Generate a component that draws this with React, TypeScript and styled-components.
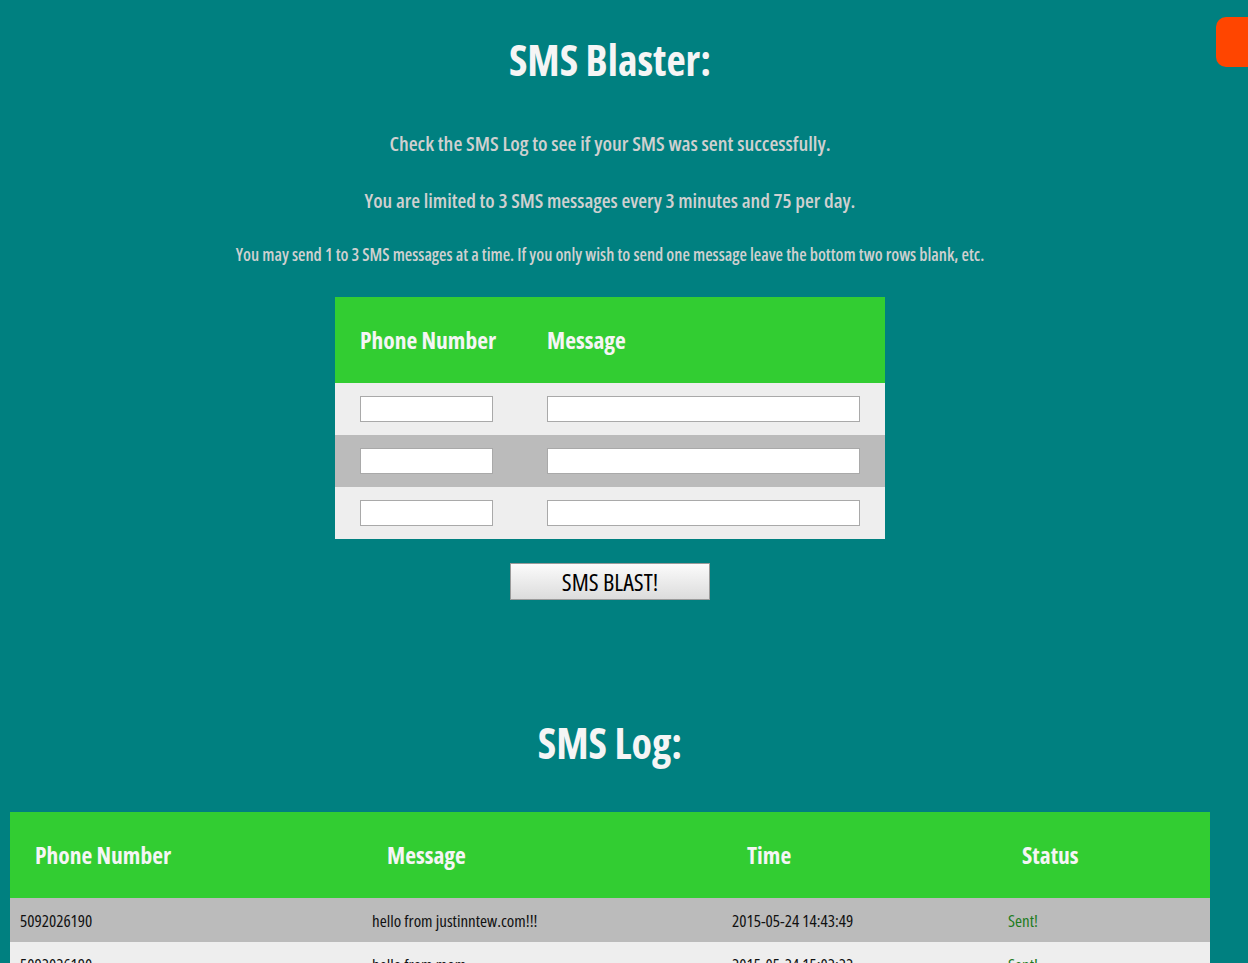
import React from "react";
import styled, { createGlobalStyle } from "styled-components";

const GlobalStyle = createGlobalStyle`
  html, body {
    margin: 0;
    padding: 0;
    background: #008080;
    overflow: hidden;
  }
  body {
    font-family: "Open Sans", "Roboto", sans-serif;
    font-stretch: 75%;
  }
`;

const Page = styled.div`
  width: 1200px;
  margin-left: 10px;
  padding-top: 30px;
  display: flex;
  flex-direction: column;
  align-items: center;
`;

const Title = styled.h1<{ $top?: number }>`
  margin: ${(p) => p.$top ?? 0}px 0 0;
  height: 60px;
  line-height: 60px;
  font-size: 42px;
  font-weight: 700;
  color: #f5f5f5;
`;

const Note = styled.p<{ $top: number; $size: number }>`
  margin: ${(p) => p.$top}px 0 0;
  height: 30px;
  line-height: 30px;
  font-size: ${(p) => p.$size}px;
  font-weight: 600;
  color: #d0d0d0;
  white-space: nowrap;
`;

const FormTable = styled.div`
  margin-top: 27px;
  width: 550px;
  display: grid;
  grid-template-columns: 187px 1fr;
`;

const HeadCell = styled.div<{ $pad: number }>`
  background: #32cd32;
  height: 86px;
  display: flex;
  align-items: center;
  padding-left: ${(p) => p.$pad}px;
  font-size: 23.5px;
  font-weight: 700;
  color: #f5f5f5;
`;

const FormCell = styled.div<{ $alt: boolean; $right?: boolean }>`
  background: ${(p) => (p.$alt ? "#bbbbbb" : "#eeeeee")};
  height: 52px;
  display: flex;
  align-items: center;
  padding-left: 25px;
  padding-right: ${(p) => (p.$right ? 25 : 0)}px;
`;

const Field = styled.input<{ $w: number }>`
  box-sizing: border-box;
  width: ${(p) => p.$w}px;
  height: 26px;
  margin: 0;
  border: 1px solid #a9a9a9;
  background: #fff;
  padding: 0 4px;
  font-family: inherit;
`;

const BlastButton = styled.button`
  margin-top: 24px;
  width: 200px;
  height: 37px;
  border: 1px solid #9a9a9a;
  background: linear-gradient(#fbfbfb, #dcdcdc);
  font-family: "Open Sans", sans-serif;
  font-stretch: 75%;
  font-size: 24px;
  font-weight: 500;
  color: #000;
  padding: 0;
  cursor: pointer;
`;

const LogTable = styled.div`
  margin-top: 39px;
  width: 1200px;
  display: grid;
  grid-template-columns: 352px 360px 276px 212px;
`;

const LogCell = styled.div<{ $alt: boolean; $status?: boolean }>`
  background: ${(p) => (p.$alt ? "#bbbbbb" : "#eeeeee")};
  height: 44px;
  display: flex;
  align-items: center;
  padding-left: 10px;
  font-size: 17px;
  font-weight: 500;
  color: ${(p) => (p.$status ? "#1e7b1e" : "#111")};
  white-space: nowrap;
`;

const Tab = styled.div`
  position: fixed;
  top: 17px;
  left: 1216px;
  width: 44px;
  height: 50px;
  border-radius: 10px;
  background: #ff4500;
`;

const logRows = [
  ["5092026190", "hello from justinntew.com!!!", "2015-05-24 14:43:49", "Sent!"],
  ["5092026190", "hello from mom", "2015-05-24 15:02:22", "Sent!"],
];

export default function App() {
  return (
    <>
      <GlobalStyle />
      <Tab />
      <Page>
        <Title>SMS Blaster:</Title>
        <Note $top={38} $size={20.5}>
          Check the SMS Log to see if your SMS was sent successfully.
        </Note>
        <Note $top={27} $size={20.2}>
          You are limited to 3 SMS messages every 3 minutes and 75 per day.
        </Note>
        <Note $top={25} $size={17.1}>
          You may send 1 to 3 SMS messages at a time. If you only wish to send one message leave the bottom two rows blank, etc.
        </Note>
        <FormTable>
          <HeadCell $pad={25}>Phone Number</HeadCell>
          <HeadCell $pad={25}>Message</HeadCell>
          {[0, 1, 2].map((i) => (
            <React.Fragment key={i}>
              <FormCell $alt={i === 1}>
                <Field $w={133} type="text" />
              </FormCell>
              <FormCell $alt={i === 1} $right>
                <Field $w={313} type="text" />
              </FormCell>
            </React.Fragment>
          ))}
        </FormTable>
        <BlastButton>SMS BLAST!</BlastButton>
        <Title $top={113}>SMS Log:</Title>
        <LogTable>
          <HeadCell $pad={25}>Phone Number</HeadCell>
          <HeadCell $pad={25}>Message</HeadCell>
          <HeadCell $pad={25}>Time</HeadCell>
          <HeadCell $pad={24}>Status</HeadCell>
          {logRows.map((r, i) => (
            <React.Fragment key={i}>
              {r.map((c, j) => (
                <LogCell key={j} $alt={i % 2 === 0} $status={j === 3}>
                  {c}
                </LogCell>
              ))}
            </React.Fragment>
          ))}
        </LogTable>
      </Page>
    </>
  );
}
